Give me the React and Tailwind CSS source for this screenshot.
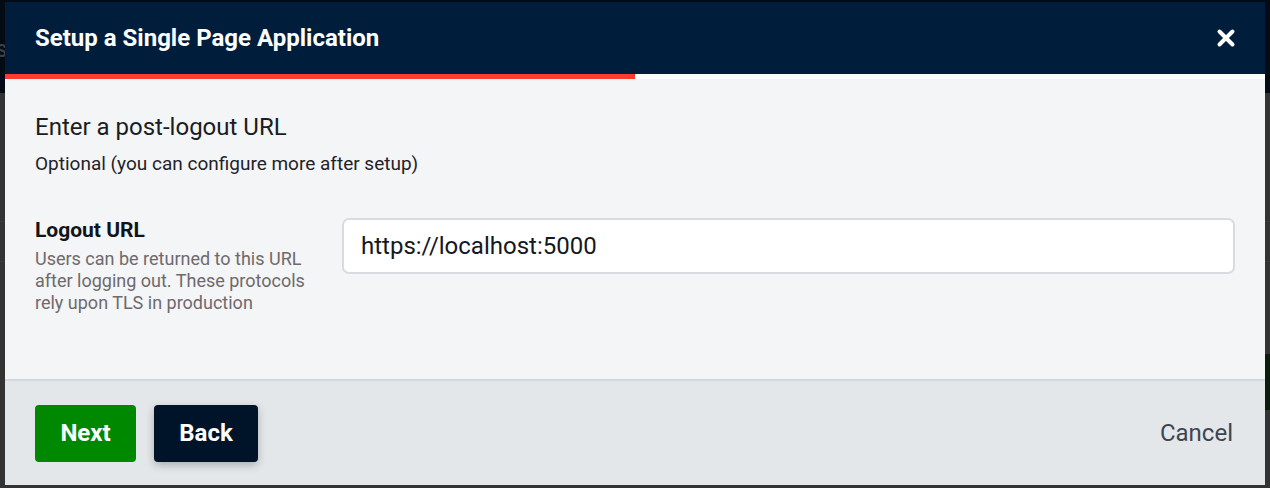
import React from 'react';

function CloseIcon() {
  return (
    <svg width="20" height="20" viewBox="0 0 20 20" fill="none">
      <path d="M3.5 3.5 L16.5 16.5 M16.5 3.5 L3.5 16.5" stroke="white" strokeWidth="4" strokeLinecap="round" />
    </svg>
  );
}

export default function App() {
  const progress = 50;

  return (
    <div
      className="relative h-[488px] w-[1270px] overflow-hidden bg-[#333333]"
      style={{ fontFamily: 'Roboto, "Liberation Sans", sans-serif' }}
    >
      {/* dimmed page behind the dialog */}
      <div className="flex h-[93px] items-center bg-[#050b14] pt-[8px] text-[18px] font-bold text-[#3b4048]">
        <span className="-ml-[4px]">S</span>
      </div>
      <div className="flex h-[261px] flex-col">
        <div className="mt-[128px] h-px bg-[#3a3a3a]" />
        <div className="mt-[39px] h-px bg-[#3a3a3a]" />
      </div>
      <div className="flex h-[56px] justify-end">
        <div className="w-[20px] bg-[#0b1e0b]" />
      </div>

      {/* dialog */}
      <div className="absolute left-[5px] top-[2px] flex h-[483px] w-[1260px] flex-col">
        <div className="flex h-[72px] items-center justify-between bg-[#001e3c] pl-[30px] pr-[27px]">
          <h1 className="text-[24px] font-bold text-white">Setup a Single Page Application</h1>
          <button className="flex h-[24px] w-[24px] items-center justify-center">
            <CloseIcon />
          </button>
        </div>
        <div className="flex h-[5px] bg-white">
          <div className="h-full bg-[#ff3b30]" style={{ width: `${progress}%` }} />
        </div>

        <div className="h-[300px] bg-[#f4f5f7] px-[30px] pt-[34px]">
          <h2 className="text-[24px] leading-[28px] text-[#1a1d21]">Enter a post-logout URL</h2>
          <p className="mt-[11px] text-[19px] leading-[24px] text-[#1f2328]">
            Optional (you can configure more after setup)
          </p>

          <div className="mt-[41px] flex">
            <div className="w-[307px] shrink-0">
              <div className="text-[21px] font-bold leading-[26px] text-[#111418]">Logout URL</div>
              <p className="mt-[5px] w-[282px] text-[18px] leading-[22px] text-[#6e6a6b]">
                Users can be returned to this URL after logging out. These protocols rely upon TLS in production
              </p>
            </div>
            <input
              className="mt-[1px] h-[56px] flex-1 rounded-[7px] border-2 border-[#d8dce1] bg-white px-[17px] text-[24px] text-[#15181c] outline-none"
              defaultValue="https://localhost:5000"
            />
          </div>
        </div>

        <div className="flex flex-1 items-center justify-between border-t-2 border-[#d3d8de] bg-[#e4e7ea] pl-[30px] pr-[32px]">
          <div className="flex gap-[18px]">
            <button className="h-[57px] w-[101px] rounded-[4px] bg-[#008800] text-[24px] font-bold text-white">
              Next
            </button>
            <button className="h-[57px] w-[104px] rounded-[4px] bg-[#001429] text-[24px] font-bold text-white shadow-[0_3px_8px_rgba(0,0,0,0.25)]">
              Back
            </button>
          </div>
          <button className="text-[24px] text-[#3e4550]">Cancel</button>
        </div>
      </div>
    </div>
  );
}
